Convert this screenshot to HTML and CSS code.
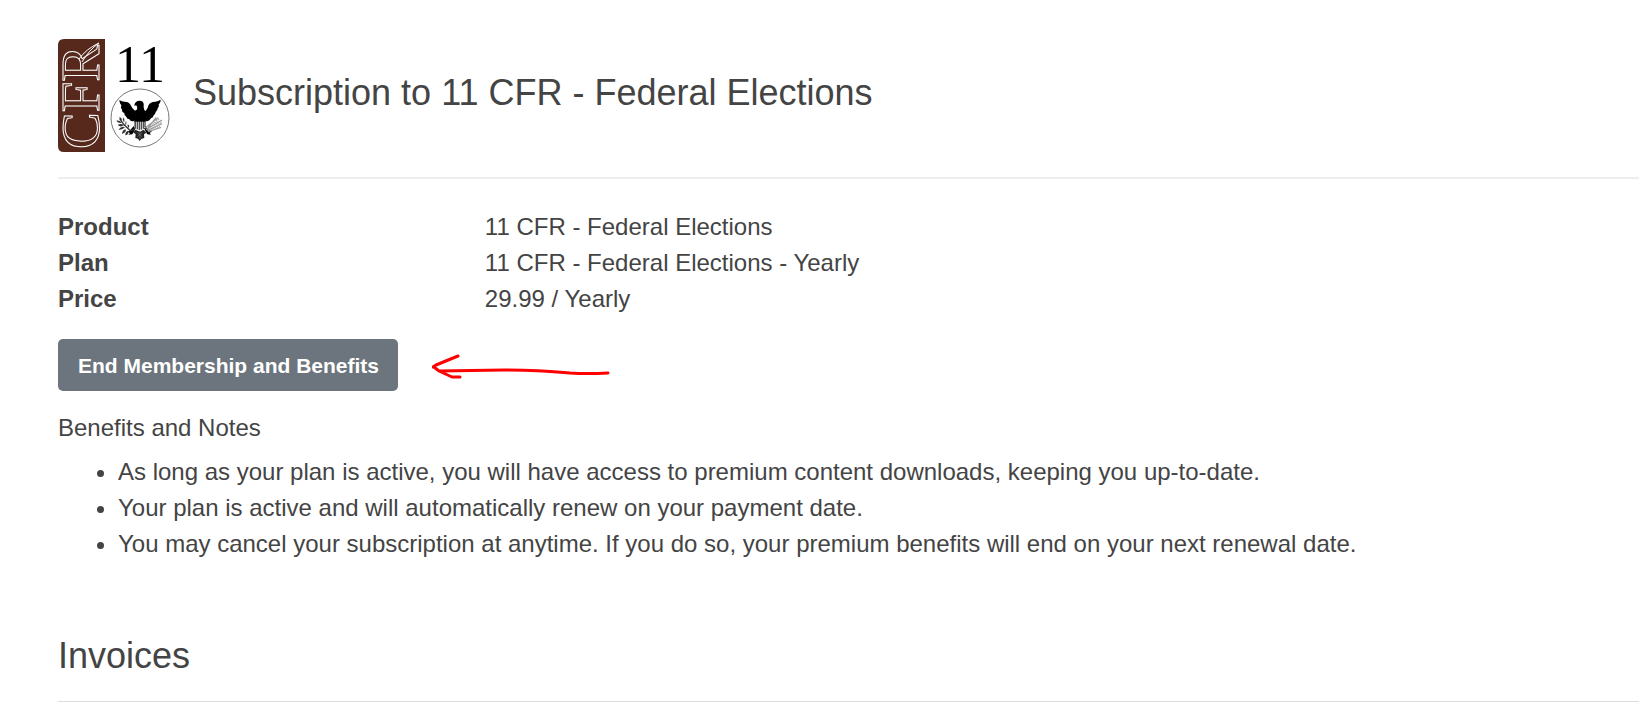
FILE: index.html
```html
<!DOCTYPE html>
<html lang="en">
<head>
  <meta charset="UTF-8" />
  <title>Subscription to 11 CFR - Federal Elections</title>
  <link rel="stylesheet" href="styles.css">
</head>
<body>
  <header class="page-header">
    <svg class="logo" viewBox="0 0 112 114" role="img" aria-label="11 CFR">
      <path fill="#56291c" d="M6 0H47V113H6Q0 113 0 107V6Q0 0 6 0Z"/>
      <text class="logo-cfr" transform="translate(41 110) rotate(-90)">CFR</text>
      <path fill="none" stroke="#fff" stroke-width="1" d="M24 23Q31 11 41 4M21 20Q28 10 41 4"/>
      <text class="logo-number" x="57" y="43">11</text>
      <circle cx="82" cy="79" r="29" fill="#fff" stroke="#777" stroke-width="1"/>
      <!-- eagle -->
      <g transform="translate(47 45) scale(.3333)">
        <path d="M43 48Q50 53 59 53Q70 53 75 60Q80 72 90 80Q97 78 97 71L94 64L88 65Q89 54 98 51Q108 48 114 54Q118 60 116 70Q116 78 122 81Q128 74 131 63Q135 54 151 53Q160 52 167 47Q168 55 161 62Q164 66 158 73Q158 80 152 84Q151 91 146 94Q145 101 138 103Q134 110 127 112L121 111L120 135H88L87 111Q77 114 73 106Q65 104 64 98Q57 95 58 87Q50 85 51 76Q46 72 49 64Q43 57 43 48Z"/>
        <path fill="#ddd" d="M88 108H121V131Q113 137 105 139Q95 137 88 131Z"/>
        <path fill="none" stroke="#333" stroke-width="3" d="M91 109V132M97 109V136M103 109V138M109 109V137M115 109V134M120 109V130"/>
        <path d="M88 108H122V113H88Z"/>
        <path d="M86 126L74 140L67 143L75 147L70 152L82 151L90 137ZM121 126L133 140L141 142L134 147L138 152L127 151L119 137Z"/>
        <path fill="#222" d="M91 137L85 146L92 150L91 162L99 164L104 171L110 164L118 162L117 151L124 146L116 137L105 143Z"/>
        <path fill="none" stroke="#777" stroke-width="2" d="M97 146L111 158M112 146L97 158M105 140V166"/>
        <path fill="#333" d="M43 98Q51 101 51 111Q43 107 43 98ZM54 100Q61 108 57 115Q52 109 54 100ZM34 110Q45 108 50 117Q40 119 34 110ZM38 123Q49 117 56 124Q47 131 38 123ZM63 111Q67 119 62 125Q58 119 63 111ZM40 137Q50 125 60 130Q52 139 40 137ZM51 150Q52 138 62 136Q65 145 51 150ZM68 121Q76 125 71 132Q66 128 68 121ZM61 154Q60 144 69 140Q74 150 61 154Z"/>
        <path fill="none" stroke="#333" stroke-width="4" d="M44 104L56 121L76 140L90 135"/>
        <path fill="none" stroke="#999" stroke-width="4" d="M119 133L160 101M123 137L171 108M127 140L171 119M129 143L168 130M126 136L153 101"/>
        <path fill="none" stroke="#bbb" stroke-width="6" stroke-dasharray="5 2" d="M143 122L163 103M147 128L170 116M143 137L164 126"/>
      </g>
    </svg>
    <h1>Subscription to 11 CFR - Federal Elections</h1>
  </header>

  <main>
    <dl class="details">
      <dt>Product</dt>
      <dd>11 CFR - Federal Elections</dd>
      <dt>Plan</dt>
      <dd>11 CFR - Federal Elections - Yearly</dd>
      <dt>Price</dt>
      <dd>29.99 / Yearly</dd>
    </dl>

    <div class="actions">
      <button type="button" class="btn">End Membership and Benefits</button>
      <svg class="arrow" viewBox="0 0 180 40" aria-hidden="true">
        <path d="M176 28Q155 29 138 28Q103 25 72 25L7 26M1 22L4 20L26 11M2 22L7 26L20 32L28 32"/>
      </svg>
    </div>

    <p class="notes-title">Benefits and Notes</p>
    <ul class="notes">
      <li>As long as your plan is active, you will have access to premium content downloads, keeping you up-to-date.</li>
      <li>Your plan is active and will automatically renew on your payment date.</li>
      <li>You may cancel your subscription at anytime. If you do so, your premium benefits will end on your next renewal date.</li>
    </ul>

    <h2>Invoices</h2>
  </main>
</body>
</html>
```

FILE: styles.css
```css
* {
  box-sizing: border-box;
}
body {
  margin: 0;
  padding: 39px 0 0 58px;
  font-family: "Liberation Sans", Arial, sans-serif;
  font-size: 24px;
  line-height: 36px;
  color: #444;
  background: #fff;
}
h1, h2 {
  margin: 0;
  font-size: 36px;
  font-weight: normal;
  line-height: 44px;
}
.page-header {
  display: flex;
  align-items: flex-start;
  gap: 23px;
  padding-bottom: 24px;
  border-bottom: 2px solid #eee;
}
.page-header h1 {
  margin-top: 32px;
}
.logo {
  flex: none;
  width: 112px;
  height: 114px;
  overflow: visible;
}
.logo-cfr {
  font-family: "Liberation Serif", serif;
  font-size: 55px;
  line-height: 1;
  fill: #56291c;
  stroke: #fff;
  stroke-width: 1;
}
.logo-number {
  font-family: "Liberation Serif", serif;
  font-size: 52px;
  line-height: 1;
  fill: #000;
}
.details {
  display: grid;
  grid-template-columns: 27% 1fr;
  margin: 30px 0 22px;
}
.details dt {
  font-weight: bold;
}
.details dd {
  margin: 0;
}
.actions {
  display: flex;
  align-items: center;
  gap: 34px;
}
.btn {
  height: 52px;
  padding: 1px 19px 0 20px;
  border: 0;
  border-radius: 5px;
  background: #6c757d;
  color: #fff;
  font-family: inherit;
  font-size: 21px;
  font-weight: bold;
}
.arrow {
  width: 180px;
  height: 40px;
  fill: none;
  stroke: #f00;
  stroke-width: 3;
  stroke-linecap: round;
  stroke-linejoin: round;
}
.notes-title {
  margin: 19px 0 8px;
}
.notes {
  margin: 0 0 72px;
  padding-left: 60px;
}
h2 {
  padding-bottom: 23px;
  border-bottom: 1px solid #ddd;
}
```
